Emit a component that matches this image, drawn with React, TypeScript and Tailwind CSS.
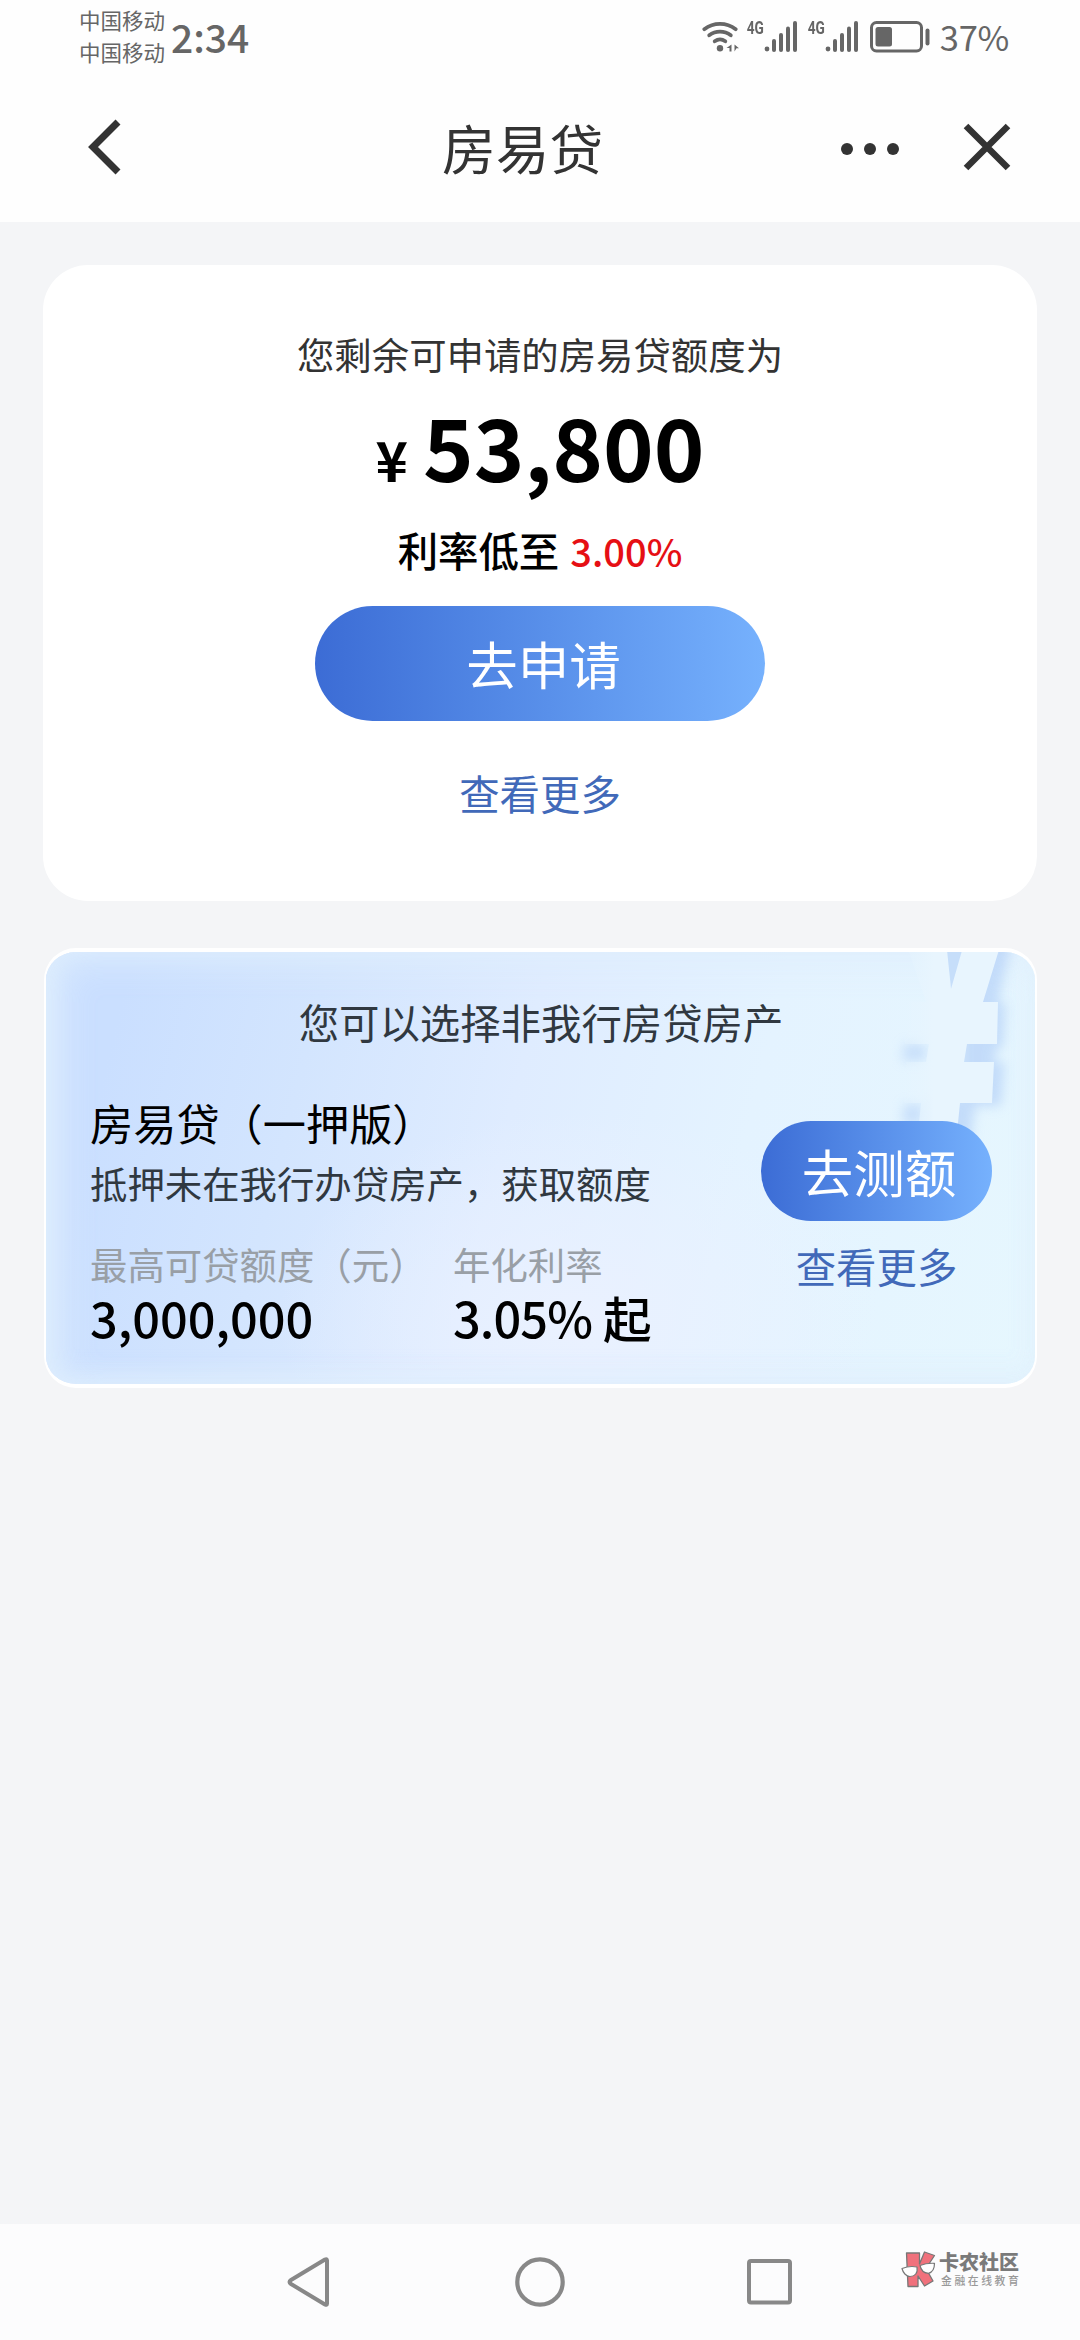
import type { ReactNode } from 'react'

const SANS = "font-['Noto_Sans_CJK_SC',sans-serif]"

function SignalIcon() {
  return (
    <div className="flex items-start">
      <span className="w-[17px] h-[14px] flex items-center justify-center text-[18px] leading-none font-bold font-['Roboto',sans-serif]">
        <span className="inline-block scale-x-[0.76]">4G</span>
      </span>
      <svg width="33" height="31" viewBox="0 0 33 31" className="fill-[#666]">
        <circle cx="3" cy="28" r="2.4" />
        <rect x="8" y="18" width="4" height="13" rx="2" />
        <rect x="15" y="12" width="4" height="19" rx="2" />
        <rect x="22" y="5.500" width="4" height="25.500" rx="2" />
        <rect x="29" y="0" width="4" height="31" rx="2" />
      </svg>
    </div>
  )
}

function StatusBar() {
  return (
    <div className="h-[80px] flex justify-between items-start text-[#666]">
      <div className="flex pl-[79px]">
        <div className="pt-[4px] text-[21.5px] leading-[32px]">
          <div>中国移动</div>
          <div>中国移动</div>
        </div>
        <div className="pl-[6px] pt-[12px] text-[39px] leading-[48px] font-medium">2:34</div>
      </div>

      <div className="flex items-start pt-[21px] pr-[71px]">
        <svg width="37" height="31" viewBox="0 0 37 31" fill="none" stroke="#666" strokeWidth="3.800" strokeLinecap="round" className="mr-[8px]">
          <path d="M2.300 8.200a26 26 0 0 1 31.400 0" />
          <path d="M7.200 14.300a18 18 0 0 1 21.600 0" />
          <path d="M12.700 20.300a9 9 0 0 1 10.600 0" />
          <circle cx="18" cy="27.300" r="3.200" fill="#666" stroke="none" />
          <path d="M29.500 23.500v7h-2v-3.500h-3zM32.500 30.500v-7l4.500 3.800h-2.500z" fill="#666" stroke="none" />
        </svg>
        <SignalIcon />
        <div className="w-[11px]" />
        <SignalIcon />
        <svg width="60" height="32" viewBox="0 0 60 32" fill="none" className="ml-[12px]">
          <rect x="1.500" y="1.500" width="50" height="28.500" rx="5" stroke="#666" strokeWidth="3" />
          <rect x="5.500" y="6" width="16.500" height="19.500" rx="2.500" fill="#666" />
          <rect x="55.500" y="7.500" width="4" height="17" rx="2" fill="#666" />
        </svg>
        <div className="ml-[10px] -mt-[9px] text-[34.5px] leading-[48px] tracking-[-0.3px]">37%</div>
      </div>
    </div>
  )
}

function Header() {
  return (
    <header className="h-[142px] flex items-center text-[#333]">
      <div className="w-[442px] pl-[88px] -mt-[8px]">
        <svg width="34" height="56" viewBox="0 0 34 56" fill="none" stroke="#333" strokeWidth="7">
          <path d="M30 3L5 28l25 25" />
        </svg>
      </div>
      <h1 className="w-[399px] h-[142px] text-[53.7px] leading-[134px]">房易贷</h1>
      <svg width="58" height="12" viewBox="0 0 58 12" className="-mt-[4px] fill-[#333]">
        <circle cx="6" cy="6" r="6" />
        <circle cx="29" cy="6" r="6" />
        <circle cx="52" cy="6" r="6" />
      </svg>
      <svg width="48" height="48" viewBox="0 0 48 48" fill="none" stroke="#333" strokeWidth="6.500" className="ml-[64px] -mt-[8px]">
        <path d="M3 3l42 42M45 3L3 45" />
      </svg>
    </header>
  )
}

function PillButton({ className, children }: { className: string; children: ReactNode }) {
  return (
    <button
      className={`
        ${className} rounded-full text-white text-[51.5px] whitespace-nowrap
        flex justify-center
        bg-linear-to-r from-[#3c6cd5] to-[#76b1fd]
      `}
    >
      {children}
    </button>
  )
}

function QuotaCard() {
  return (
    <section className="h-[636px] mx-[43px] mt-[43px] rounded-[45px] bg-white flex flex-col items-center">
      <p className="mt-[64px] text-[37.4px] leading-[50px] text-[#333]">您剩余可申请的房易贷额度为</p>
      <div className="mt-[16px] h-[100px] flex items-baseline font-bold text-black leading-[100px]">
        <span className="text-[55px]">¥</span>
        <span className="ml-[15px] text-[86px]">53,800</span>
      </div>
      <p className="mt-[28px] text-[40.4px] leading-[54px] font-medium text-black">
        利率低至 <span className="ml-[2px] text-[38px] text-[#e60f14]">3.00%</span>
      </p>
      <PillButton className="mt-[28px] w-[450px] h-[115px] pl-[7px] leading-[113px]">去申请</PillButton>
      <a className="mt-[45px] text-[40.4px] leading-[54px] text-[#4169b9]">查看更多</a>
    </section>
  )
}

// Tilted currency sign that fades into the card's corner
function YenMark() {
  return (
    <svg width="150" height="190" viewBox="885 952 150 190" className="absolute right-0 top-0">
      <defs>
        <filter id="soft" x="-40%" y="-40%" width="180%" height="180%">
          <feGaussianBlur stdDeviation="6" />
        </filter>
        <linearGradient id="face" x1="0" x2="1" y1="0" y2="0">
          <stop offset="0" stopColor="#e5f4fe" stopOpacity="0.3" />
          <stop offset="0.3" stopColor="#e8f5fe" />
        </linearGradient>
      </defs>
      <path
        d="M945 940h67l-14 62 8 2-3 44h-6l-4 14h12l-4 44h-26l-5 40h-44l4-48h30v-96h-12z"
        fill="#b5d1f8"
        opacity="0.7"
        filter="url(#soft)"
      />
      <path d="M904 1044h22v17h-24zM904 1104h18v20h-20z" fill="#b5d1f8" opacity="0.6" filter="url(#soft)" />
      <path d="M946 952h16l-10 37z" fill="#c6defa" />
      <path
        d="M905 940h41l5 49 14-49h37l-19 62h15l-1 42h-30l-3 18h30l-2 41h-32l-3 30h-39l3-30h-17l2-41h20l3-18h-24l2-42h19z"
        fill="url(#face)"
      />
    </svg>
  )
}

function ProductCard() {
  return (
    <section
      className="
        relative h-[440px] mt-[47px] ml-[44px] mr-[43px]
        rounded-[32px] border-y-4 border-x-2 border-white overflow-hidden
        bg-[radial-gradient(ellipse_at_54%_85%,#eaf1ff_0%,#eaf1ff00_40%),linear-gradient(104deg,#cadfff_8%,#d3e5fe_26%,#dfecff_46%,#e4f3ff_68%,#e6f7fe_100%)]
      "
    >
      <div className="absolute inset-0 shadow-[inset_14px_8px_34px_2px_#dfeffdd9,inset_0_-8px_24px_0_#dfeffdb3]" />
      <YenMark />
      <div className="relative">
        <h2 className="pt-[43px] pl-[1px] text-center text-[40.4px] leading-[54px] text-[#303840]">
          您可以选择非我行房贷房产
        </h2>
        <div className="flex justify-between pl-[44px] pr-[43px] pt-[45px]">
          <div>
            <h3 className="text-[43.2px] leading-[57px] text-black">房易贷（一押版）</h3>
            <p className="mt-[5px] text-[37.4px] leading-[54px] text-[#303840]">抵押未在我行办贷房产，获取额度</p>
            <div className="flex mt-[27px] whitespace-nowrap">
              <div className="w-[363px]">
                <div className="text-[37.4px] leading-[54px] text-[#999fa6]">最高可贷额度（元）</div>
                <div className="text-[48.7px] leading-[52px] font-medium text-black">3,000,000</div>
              </div>
              <div>
                <div className="text-[37.4px] leading-[54px] text-[#999fa6]">年化利率</div>
                <div className="text-[48.7px] leading-[52px] font-medium text-black">
                  <span className="tracking-[-0.9px]">3.05%</span> 起
                </div>
              </div>
            </div>
          </div>
          <div className="pt-[27px] flex flex-col items-center">
            <PillButton className="w-[231px] h-[100px] leading-[99px] pl-[5px]">去测额</PillButton>
            <a className="mt-[18px] text-[40.4px] leading-[54px] text-[#4169b9]">查看更多</a>
          </div>
        </div>
      </div>
    </section>
  )
}

function Watermark() {
  return (
    <div className="flex ml-[109px] -mt-[25px]">
      <svg width="36" height="38" viewBox="0 0 36 38" strokeLinejoin="round">
        <path d="M5.500 2h13v11l5-12 10 3.500-8.500 13 7 12.500-8.500 5-6.500-10v10.500H7z" fill="#f0717c" stroke="#777" strokeWidth="1.300" />
        <path d="M1 17.500c5-2 10-2.500 15-1.500 1 6-2 9.500-7 9.500-4 0-7-4-8-8zM19 14.500c5-2 9-2.500 14.500-2.200 0 5-2 9-6 10-4.500 0-7.500-3.300-8.500-7.800z" fill="#fff" stroke="#777" strokeWidth="1.200" />
      </svg>
      <div className="ml-[2px] whitespace-nowrap">
        <div className="text-[20px] leading-[22px] font-black text-[#7a7a7a]">卡农社区</div>
        <div className="ml-[2px] text-[10.800px] leading-[15px] tracking-[2.600px] font-medium text-[#999]">金融在线教育</div>
      </div>
    </div>
  )
}

function NavBar() {
  return (
    <nav className="h-[116px] flex items-center bg-[#fcfcfd]">
      <svg width="44" height="50" viewBox="0 0 44 50" fill="none" stroke="#888" strokeWidth="4" strokeLinejoin="round" className="ml-[287px]">
        <path d="M40 3.500v43q0 2-2 1L4 27q-3-2 0-4L38 2.500q2-1 2 1z" />
      </svg>
      <svg width="50" height="50" viewBox="0 0 50 50" fill="none" stroke="#888" strokeWidth="4.200" className="ml-[184px]">
        <circle cx="25" cy="25" r="22.700" />
      </svg>
      <svg width="45" height="46" viewBox="0 0 45 46" fill="none" stroke="#888" strokeWidth="4" className="ml-[182px]">
        <rect x="2" y="2" width="41" height="41.500" rx="2" />
      </svg>
      <Watermark />
    </nav>
  )
}

export default function App() {
  return (
    <div className={`${SANS} w-[1080px] h-[2340px] flex flex-col bg-[#f4f5f7] overflow-hidden`}>
      <div className="bg-[#fefefe]">
        <StatusBar />
        <Header />
      </div>
      <main className="flex-1">
        <QuotaCard />
        <ProductCard />
      </main>
      <NavBar />
    </div>
  )
}
